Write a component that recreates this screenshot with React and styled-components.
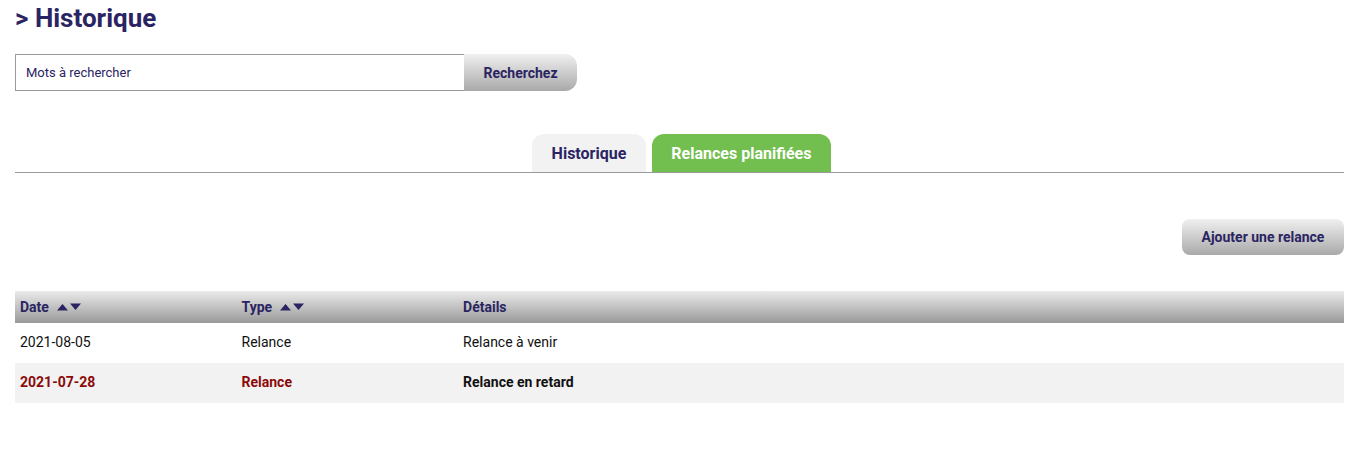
import React from 'react'
import styled, { createGlobalStyle } from 'styled-components'

const GlobalStyle = createGlobalStyle`
  body {
    margin: 0;
    font-family: Roboto, "Liberation Sans", sans-serif;
    background: #fff;
  }
`

const navy = '#2a2462'

const Page = styled.div`
  padding: 0 24px 0 15px;
`

const Title = styled.h1`
  margin: 0;
  padding-top: 3px;
  font-size: 26px;
  font-weight: 700;
  color: ${navy};
  line-height: 30px;
`

const SearchBar = styled.form`
  display: flex;
  margin-top: 21px;
  height: 37px;
`

const SearchInput = styled.input`
  box-sizing: border-box;
  width: 449px;
  height: 37px;
  border: 1px solid #9a9a9a;
  border-right: none;
  padding: 0 10px;
  font-family: Roboto, sans-serif;
  font-size: 13px;
  color: ${navy};
  outline: none;
  &::placeholder { color: ${navy}; }
`

const GreyButton = styled.button`
  border: none;
  background: linear-gradient(#f0f0f0, #a9a9a9);
  color: ${navy};
  font-family: Roboto, sans-serif;
  font-weight: 700;
  font-size: 14px;
  cursor: pointer;
`

const SearchButton = styled(GreyButton)`
  width: 113px;
  height: 37px;
  border-radius: 0 12px 12px 0;
`

const Tabs = styled.div`
  display: flex;
  justify-content: center;
  gap: 6px;
  margin-top: 43px;
  border-bottom: 1px solid #999;
  padding-left: 4px;
`

const Tab = styled.div`
  height: 38px;
  display: flex;
  align-items: center;
  padding: 0 19.5px;
  border-radius: 12px 12px 0 0;
  font-size: 16px;
  font-weight: 700;
  background: ${p => (p.$active ? '#72be4e' : '#f2f2f2')};
  color: ${p => (p.$active ? '#fff' : navy)};
`

const Actions = styled.div`
  display: flex;
  justify-content: flex-end;
  margin-top: 46px;
`

const AddButton = styled(GreyButton)`
  width: 162px;
  height: 36px;
  border-radius: 8px;
`

const Table = styled.table`
  width: 100%;
  margin-top: 36px;
  border-collapse: collapse;
  font-size: 14px;
`

const Th = styled.th`
  height: 32px;
  padding: 0 5px;
  text-align: left;
  color: ${navy};
  font-weight: 700;
  background: linear-gradient(#ebebeb, #999);
  width: ${p => p.$w || 'auto'};
`

const Sort = styled.svg`
  margin-left: 8px;
  vertical-align: 1px;
`

const SortArrows = () => (
  <Sort width="25" height="8" viewBox="0 0 25 8" fill={navy}>
    <path d="M0 7.5 L5.5 1 L11 7.5 Z" />
    <path d="M13 0.5 L24 0.5 L18.5 7 Z" />
  </Sort>
)

const Row = styled.tr`
  background: ${p => (p.$late ? '#f2f2f2' : '#fff')};
`

const Td = styled.td`
  height: 38px;
  padding: 0 5px 2px;
  color: ${p => (p.$red ? '#8b0a0a' : '#111')};
  font-weight: ${p => (p.$bold ? 700 : 400)};
`

const rows = [
  { date: '2021-08-05', type: 'Relance', details: 'Relance à venir', late: false },
  { date: '2021-07-28', type: 'Relance', details: 'Relance en retard', late: true },
]

export default function App() {
  return (
    <Page>
      <GlobalStyle />
      <Title>&gt; Historique</Title>
      <SearchBar onSubmit={e => e.preventDefault()}>
        <SearchInput placeholder="Mots à rechercher" />
        <SearchButton>Recherchez</SearchButton>
      </SearchBar>
      <Tabs>
        <Tab>Historique</Tab>
        <Tab $active>Relances planifiées</Tab>
      </Tabs>
      <Actions>
        <AddButton>Ajouter une relance</AddButton>
      </Actions>
      <Table>
        <thead>
          <tr>
            <Th $w="16.67%">Date<SortArrows /></Th>
            <Th $w="16.67%">Type<SortArrows /></Th>
            <Th>Détails</Th>
          </tr>
        </thead>
        <tbody>
          {rows.map(r => (
            <Row key={r.date} $late={r.late}>
              <Td $red={r.late} $bold={r.late}>{r.date}</Td>
              <Td $red={r.late} $bold={r.late}>{r.type}</Td>
              <Td $bold={r.late}>{r.details}</Td>
            </Row>
          ))}
        </tbody>
      </Table>
    </Page>
  )
}
